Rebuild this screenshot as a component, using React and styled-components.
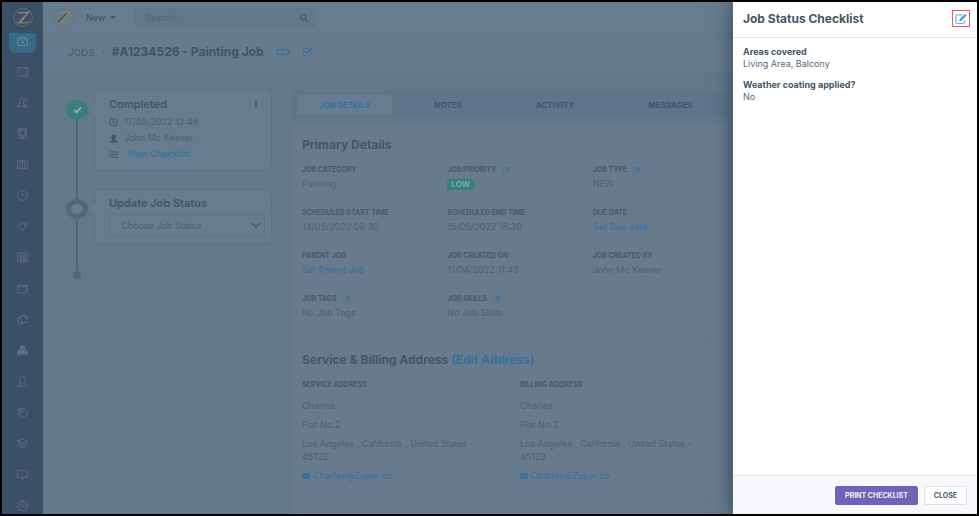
import styled, { createGlobalStyle } from 'styled-components';

const GlobalStyle = createGlobalStyle`
  *,
  *::before,
  *::after {
    box-sizing: border-box;
  }
  body {
    margin: 0;
    overflow: hidden;
    font-family: Inter, 'Open Sans', sans-serif;
    font-size: 9px;
    line-height: 12px;
    color: #4c6174;
  }
  h1, h2, h3, p, ul, ol, dl, dd {
    margin: 0;
    padding: 0;
    list-style: none;
  }
  button, input, select {
    font-family: inherit;
    margin: 0;
  }
  a {
    text-decoration: none;
  }
  svg {
    display: block;
    flex: none;
  }
`;

const Frame = styled.div`
  position: relative;
  display: flex;
  height: 100vh;
  border: 2px solid #000;
  overflow: hidden;
  background-color: #62798c;
`;

const Sidebar = styled.aside`
  width: 41px;
  flex: none;
  display: flex;
  flex-direction: column;
  background-color: #3b4f66;
  color: #607286;
`;
const SidebarLogo = styled.a`
  height: 31px;
  flex: none;
  display: flex;
  align-items: center;
  justify-content: center;
`;
const NavLink = styled.a`
  height: ${({ $active }) => ($active ? '20px' : '31px')};
  margin: ${({ $active }) => ($active ? '0 7px 3px' : '0 7px')};
  padding-bottom: ${({ $active }) => ($active ? '4px' : '0')};
  border-radius: 0 0 6px 6px;
  flex: none;
  display: flex;
  align-items: center;
  justify-content: center;
  color: ${({ $active }) => ($active ? '#6b8fa6' : 'inherit')};
  background-color: ${({ $active }) => ($active ? '#366a87' : 'transparent')};
`;

const Page = styled.div`
  flex: 1;
  min-width: 0;
  display: flex;
  flex-direction: column;
`;
const TopBar = styled.header`
  height: 32px;
  flex: none;
  display: flex;
  align-items: center;
  padding-left: 11px;
  background-color: #677d8f;
  border-bottom: 1px solid #61778a;
`;
const NewButton = styled.button`
  display: flex;
  align-items: center;
  gap: 5px;
  margin-left: 12px;
  padding: 0;
  border: none;
  background: none;
  font-size: 9px;
  font-weight: 500;
  color: #44586a;
`;
const SearchBox = styled.label`
  width: 181px;
  height: 19px;
  margin-left: 19px;
  padding: 0 8px 0 10px;
  display: flex;
  align-items: center;
  border-radius: 2px;
  background-color: #61778a;
  color: #44586a;
`;
const SearchInput = styled.input`
  flex: 1;
  min-width: 0;
  padding: 0;
  border: none;
  outline: none;
  background: none;
  font-size: 9px;
  &::placeholder {
    color: #50667a;
    opacity: 1;
  }
`;

const Crumbs = styled.nav`
  height: 39px;
  flex: none;
  display: flex;
  align-items: center;
  padding: 0 0 2px 24px;
  background-color: #667b8d;
  border-bottom: 1px solid #61768a;
`;
const CrumbLink = styled.a`
  font-size: 12px;
  line-height: 16px;
  color: #4b6073;
`;
const CrumbTitle = styled.h1`
  font-size: 12px;
  line-height: 16px;
  font-weight: 700;
  color: #40546a;
`;
const CrumbArrow = styled.svg`
  margin: 0 6px;
`;
const IconButton = styled.button`
  display: inline-flex;
  padding: 0;
  margin-left: ${({ $gap }) => $gap || 6}px;
  border: none;
  background: none;
  color: #33709f;
`;

/* right padding keeps the columns clear of the drawer */
const Content = styled.main`
  flex: 1;
  min-height: 0;
  display: grid;
  grid-template-columns: 205px minmax(0, 1fr);
  gap: 21px;
  padding: 18px 249px 0 23px;
`;

const Timeline = styled.ol`
  align-self: start;
  display: flex;
  flex-direction: column;
  gap: 20px;
  background: linear-gradient(#52677a, #52677a) no-repeat 10px 20px / 2px
    calc(100% - 22px);
`;
const TimelineItem = styled.li`
  display: flex;
  gap: 8px;
`;
const Marker = styled.span`
  width: 22px;
  height: 20px;
  margin-top: 9px;
  flex: none;
  display: flex;
  align-items: center;
  justify-content: center;
  border-radius: 50%;
  border: ${({ $done }) => ($done ? 'none' : '5px solid #52677a')};
  background-color: ${({ $done }) => ($done ? '#37807c' : '#677c8e')};
  color: #93a9b4;
`;
const EndDot = styled.li`
  width: 8px;
  height: 8px;
  margin: 8px 0 0 7px;
  border-radius: 50%;
  background-color: #52677a;
`;
const StatusCard = styled.section`
  position: relative;
  flex: 1;
  padding: 5px 6px 7px 13px;
  border-radius: 3px;
  background-color: #677c8e;
  box-shadow: 0 0 2px rgba(60, 80, 100, 0.35);
  &::before {
    content: '';
    position: absolute;
    left: -6px;
    top: 13px;
    border: 6px solid transparent;
    border-left: none;
    border-right-color: #677c8e;
  }
`;
const StatusTitle = styled.h2`
  display: flex;
  justify-content: space-between;
  align-items: center;
  padding-right: 7px;
  font-size: 11px;
  line-height: 16px;
  font-weight: 600;
  color: #42576a;
`;
const MenuButton = styled.button`
  padding: 0;
  border: none;
  background: none;
  color: #42576a;
`;
const StatusList = styled.ul`
  margin: 2px 0 1px;
`;
const StatusRow = styled.li`
  display: flex;
  align-items: center;
  gap: 6px;
  line-height: 16px;
`;
const StatusSelect = styled.select`
  display: block;
  width: 100%;
  height: 22px;
  margin-top: 3px;
  padding: 0 7px;
  border: 1px solid #5f7488;
  border-radius: 2px;
  background-color: #677c8e;
  font-size: 9px;
  color: #4c6174;
`;
const TextLink = styled.a`
  color: #35719f;
`;
const ChecklistLink = styled(TextLink)`
  margin-left: 3px;
`;

const Details = styled.div`
  min-width: 0;
  display: flex;
  flex-direction: column;
`;
const Tabs = styled.div`
  height: 27px;
  flex: none;
  display: flex;
  align-items: center;
  padding-left: 5px;
  border-radius: 3px;
  background-color: #60748b;
`;
const Tab = styled.button`
  height: 20px;
  padding: 0 ${({ $active }) => ($active ? 22 : 37)}px;
  margin-right: ${({ $active }) => ($active ? 5 : 0)}px;
  border: none;
  border-radius: 3px;
  background-color: ${({ $active }) => ($active ? '#677c8e' : 'transparent')};
  color: ${({ $active }) => ($active ? '#2f74a8' : '#42576a')};
  font-size: 8px;
  font-weight: 700;
  white-space: nowrap;
`;
const DetailsCard = styled.div`
  flex: 1;
  margin-top: 6px;
  padding-left: 10px;
  border-radius: 3px 3px 0 0;
  background-color: #687b8d;
  box-shadow: 0 0 2px rgba(60, 80, 100, 0.35);
`;
const Section = styled.section`
  margin-right: 10px;
  padding-top: ${({ $top }) => $top}px;
  border-bottom: 1px solid #62768a;
`;
const SectionTitle = styled.h2`
  font-size: 12px;
  line-height: 16px;
  font-weight: 700;
  color: #42576a;
`;
const FieldGrid = styled.dl`
  display: grid;
  grid-template-columns: repeat(3, 1fr);
  row-gap: 15px;
  margin: 11px -20px 20px 0;
`;
const FieldLabel = styled.dt`
  display: flex;
  align-items: center;
  height: 12px;
  font-size: 7px;
  font-weight: 700;
  color: #455a6d;
`;
const FieldValue = styled.dd`
  height: 16px;
  line-height: 16px;
`;
const Badge = styled.span`
  display: inline-block;
  padding: 0 4px;
  border-radius: 2px;
  background-color: #37807c;
  color: #8fa9b5;
  font-size: 8px;
  line-height: 11px;
  font-weight: 600;
`;
const AddressGrid = styled.div`
  display: grid;
  grid-template-columns: repeat(2, 1fr);
  margin: 11px -20px 21px 0;
`;
const Address = styled.address`
  display: flex;
  flex-direction: column;
  gap: 6px;
  padding-right: 40px;
  font-style: normal;
  line-height: 13px;
`;
const AddressLabel = styled.h3`
  margin: 0 0 2px;
  font-size: 7px;
  line-height: 12px;
  font-weight: 700;
  color: #455a6d;
`;
const MailLink = styled.a`
  display: flex;
  align-items: center;
  gap: 3px;
  color: #35719f;
`;

const Drawer = styled.aside`
  position: absolute;
  top: 0;
  right: 0;
  bottom: 0;
  width: 244px;
  display: flex;
  flex-direction: column;
  background-color: #fff;
  color: #566a78;
  box-shadow: 0 0 20px rgba(30, 45, 60, 0.7);
`;
const DrawerHeader = styled.header`
  height: 36px;
  flex: none;
  display: flex;
  align-items: center;
  justify-content: space-between;
  padding: 0 7px 2px 10px;
  border-bottom: 1px solid #e6e9ec;
`;
const DrawerTitle = styled.h2`
  font-size: 12px;
  line-height: 16px;
  font-weight: 700;
  color: #435663;
`;
const EditButton = styled.button`
  width: 18px;
  height: 17px;
  padding: 0;
  display: flex;
  align-items: center;
  justify-content: center;
  border: 1px solid #f0595c;
  background: none;
  color: #3e9be4;
`;
const Answers = styled.dl`
  flex: 1;
  padding: 8px 10px;
`;
const Question = styled.dt`
  line-height: 12px;
  font-weight: 700;
  color: #435663;
`;
const Answer = styled.dd`
  margin-bottom: 10px;
  line-height: 11px;
`;
const DrawerFooter = styled.footer`
  height: 39px;
  flex: none;
  display: flex;
  align-items: center;
  justify-content: flex-end;
  gap: 6px;
  padding-right: 10px;
  border-top: 1px solid #e6e9ec;
  background-color: #f7f8fb;
`;
const Button = styled.button`
  height: 19px;
  padding: 0 9px;
  border: 1px solid ${({ $primary }) => ($primary ? '#6f63b8' : '#dfe3e8')};
  border-radius: 2px;
  background-color: ${({ $primary }) => ($primary ? '#6f63b8' : '#fff')};
  color: ${({ $primary }) => ($primary ? '#f1effa' : '#4b5d6b')};
  font-size: 7px;
  font-weight: 700;
`;

const Logo = () => (
  <svg width="20" height="19" viewBox="0 0 20 19" fill="none" aria-label="Zuper">
    <ellipse cx="10" cy="9.5" rx="9.4" ry="8.8" stroke="#6e7168" strokeWidth="0.9" />
    <path d="M3.800 4.600C7 3.600 12 4.300 16.800 3.600L15.200 5.400H5z" fill="#85806a" />
    <path d="M13.300 4.600l3.500-1L8.400 14H4z" fill="#8d866a" />
    <path d="M12 5.200h1.800L5.500 14H3.200z" fill="#43505a" />
    <path d="M3.200 14.200h9.300c2 0 3.500-.8 4.300-2.600-.2 2.600-1.500 4-4 4H4.500z" fill="#85806a" />
  </svg>
);

const EditIcon = ({ size = 8 }) => (
  <svg width={size} height={size} viewBox="0 0 16 16" fill="none" stroke="currentColor">
    <path d="M10 2.500H3A1.800 1.800 0 0 0 1.200 4.300v8A1.800 1.800 0 0 0 3 14.100h8.200a1.800 1.800 0 0 0 1.800-1.800V9.500" strokeWidth="1.200" />
    <path d="M13.200 1.500l1.900 1.900-6.600 6.600-2.500.600.600-2.500z" fill="currentColor" strokeWidth=".5" />
  </svg>
);

const navIcons = [
  {
    label: 'Jobs',
    d: 'M1 4h14v10H1zM5 4V1.500h6V4M1 6h2M13 6h2M8 6.500v5M5.500 9h5',
  },
  {
    label: 'Calendar',
    d: 'M1 2.500h14v12H1zM4 1v3M12 1v3M4 7h1M7.500 7h1M11 7h1M4 9.500h1M7.500 9.500h1M11 9.500h1M4 12h1M7.500 12h1M11 12h1',
  },
  {
    label: 'Customers',
    d: 'M6 14H1c0-2 1-3 3-4 .8-.5.500-1 0-2C2 4 4 1 6.500 1S11 4 9.500 8c-.5 1-.5 1.500 0 2 2 1 3.500 2 3.500 4zM11 2c3 0 3.500 3 2 6M11 9.500l4 4-2 1.500-3-3',
  },
  { label: 'Properties', d: 'M2.500 1h11v14h-11zM4.500 3h7v8h-7zM6.500 15v-2.500h3V15' },
  {
    label: 'Map',
    d: 'M1 3l3.500-1.500v12L1 15zM4.500 1.500L8 3v12l-3.500-1.500M8 3l3.500-1.500v12L8 15M11.500 1.500L15 3v12l-3.500-1.500',
  },
  { label: 'Timesheets', d: 'M8 1a7 7 0 1 0 0 14A7 7 0 1 0 8 1zM8 4v4.500l3 1.500' },
  { label: 'Products', d: 'M1 8.500L8 2.500l6-.5.5 5.500-7 6.500zM11 4.500h1.500V6H11z' },
  {
    label: 'Quotes',
    d: 'M1 1.500h14v13H1zM4 4.500h3v3H4zM9 4.500h3v3H9zM4 9.500h3v3H4zM9 9.500h3v3H9z',
  },
  { label: 'Invoices', d: 'M1 5h12.500v9.500H1zM2 5V2h5l1 1.500h6.500V12M3.500 8v1.500' },
  { label: 'Documents', d: 'M6 2h6l3 3v7H6zM11.500 2v3.500H15M6 5H1.500v9.500H9V12' },
  {
    label: 'Assets',
    d: 'M8 1.500l3 1.500v3L8 7.500 5 6V3zM4 8l3 1.500v3.500l-3 1.500L1 13V9.500zM12 8l3 1.500V13l-3 1.500L9 13V9.500zM5 3l3 1.500L11 3M1 9.500L4 11l3-1.500M9 9.500l3 1.500 3-1.500',
    bold: true,
  },
  {
    label: 'Team',
    d: 'M1 14.500h14c0-2-1-2.500-4.500-3.500-.8-.5-.5-1.500 0-2.500C13 4.500 11 1 8 1S3 4.500 5.500 8.500c.5 1 .8 2 0 2.500C2 12 1 12.500 1 14.500z',
  },
  { label: 'Reports', d: 'M7.500 2A6.500 6.500 0 1 1 2 7.500h5.500zM5 1.500A5 5 0 0 0 1.500 5H5z' },
  {
    label: 'Stacks',
    d: 'M8 1l7 3.500L8 8 1 4.500zM1 7.500L8 11l7-3.500M1 11l7 3.500 7-3.500',
  },
  { label: 'Devices', d: 'M1 2h14v10H1zM5.500 14.500h5M8 12v2.500' },
  {
    label: 'Settings',
    d: 'M6.800 1h2.400l.4 2 1.600.7 1.700-1.100 1.600 1.600-1.100 1.700.7 1.500 1.900.4v2.400l-2 .4-.6 1.500 1.100 1.700-1.600 1.600-1.700-1.100-1.600.7-.4 1.900H6.800l-.4-2-1.600-.6-1.700 1.100-1.600-1.600 1.100-1.700L2 10.500l-1.500-.3V7.800l2-.4L3 5.900 1.900 4.200l1.600-1.600 1.700 1.100L6.400 3zM8 5.500a2.500 2.500 0 1 0 0 5 2.500 2.500 0 1 0 0-5z',
  },
];

const statusIcons = {
  time: (
    <svg width="9" height="9" viewBox="0 0 16 16" fill="none" stroke="#42576a" strokeWidth="1.800">
      <circle cx="8" cy="8" r="6.800" />
      <path d="M8 4v4.500H11" />
    </svg>
  ),
  user: (
    <svg width="9" height="9" viewBox="0 0 16 16" fill="#42576a">
      <path d="M8 1c3 0 4.500 2 4 5-.3 2-1.300 3-2 4 1 1.500 5.500 1.500 5.500 5H.5c0-3.500 4.500-3.500 5.500-5-.7-1-1.700-2-2-4-.5-3 1-5 4-5z" />
    </svg>
  ),
  list: (
    <svg width="9" height="9" viewBox="0 0 16 16" stroke="#42576a" strokeWidth="2">
      <path d="M0 3.500h3M4 3.500h12M0 8h3M4 8h12M0 12.500h3M4 12.500h12" />
    </svg>
  ),
};

const fields = [
  { label: 'JOB CATEGORY', value: 'Painting' },
  { label: 'JOB PRIORITY', value: <Badge>LOW</Badge>, editable: true },
  { label: 'JOB TYPE', value: 'NEW', editable: true },
  { label: 'SCHEDULED START TIME', value: '14/05/2022 09:30' },
  { label: 'SCHEDULED END TIME', value: '15/05/2022 18:30' },
  { label: 'DUE DATE', value: <TextLink href="#due">Set Due date</TextLink> },
  { label: 'PARENT JOB', value: <TextLink href="#parent">Set Parent Job</TextLink> },
  { label: 'JOB CREATED ON', value: '11/04/2022 11:43' },
  { label: 'JOB CREATED BY', value: 'John Mc Keever' },
  { label: 'JOB TAGS', value: 'No Job Tags', editable: true },
  { label: 'JOB SKILLS', value: 'No Job Skills', editable: true },
];

const tabs = ['JOB DETAILS', 'NOTES', 'ACTIVITY', 'MESSAGES'];

const SideNav = () => (
  <Sidebar>
    <SidebarLogo href="#home">
      <Logo />
    </SidebarLogo>
    {navIcons.map(({ label, d, bold }, i) => (
      <NavLink key={label} href={`#${label}`} aria-label={label} $active={i === 0}>
        <svg
          width="11"
          height="11"
          viewBox="0 0 16 16"
          fill="none"
          stroke="currentColor"
          strokeWidth={bold ? 2 : 1.2}
        >
          <path d={d} />
        </svg>
      </NavLink>
    ))}
  </Sidebar>
);

const JobTimeline = () => (
  <Timeline>
    <TimelineItem>
      <Marker $done>
        <svg width="9" height="8" viewBox="0 0 9 8" fill="none" stroke="currentColor" strokeWidth="2">
          <path d="M1 4l2.500 2.300L8 1.500" />
        </svg>
      </Marker>
      <StatusCard>
        <StatusTitle>
          Completed
          <MenuButton aria-label="More actions">
            <svg width="3" height="8" viewBox="0 0 3 8" fill="currentColor">
              <path d="M0 0h2v2H0zM0 3h2v2H0zM0 6h2v2H0z" />
            </svg>
          </MenuButton>
        </StatusTitle>
        <StatusList>
          <StatusRow>
            {statusIcons.time}
            17/05/2022 12:46
          </StatusRow>
          <StatusRow>
            {statusIcons.user}
            John Mc Keever
          </StatusRow>
          <StatusRow>
            {statusIcons.list}
            <ChecklistLink href="#checklist">View Checklist</ChecklistLink>
          </StatusRow>
        </StatusList>
      </StatusCard>
    </TimelineItem>
    <TimelineItem>
      <Marker />
      <StatusCard>
        <StatusTitle>Update Job Status</StatusTitle>
        <StatusSelect aria-label="Job status">
          <option>Choose Job Status</option>
        </StatusSelect>
      </StatusCard>
    </TimelineItem>
    <EndDot />
  </Timeline>
);

const AddressBlock = ({ label }) => (
  <Address>
    <AddressLabel>{label}</AddressLabel>
    <p>Charles</p>
    <p>Flat No.2</p>
    <p>
      Los Angeles , California , United States -<br />
      45123
    </p>
    <MailLink href="mailto:Charles@Zuper.co">
      <svg width="8" height="6" viewBox="0 0 8 6">
        <rect width="8" height="6" rx="1" fill="currentColor" />
        <path d="M1 1.500l3 2 3-2" fill="none" stroke="#687b8d" strokeWidth=".6" />
      </svg>
      Charles@Zuper.co
    </MailLink>
  </Address>
);

const JobDetails = () => (
  <Details>
    <Tabs role="tablist">
      {tabs.map((tab, i) => (
        <Tab key={tab} role="tab" aria-selected={i === 0} $active={i === 0}>
          {tab}
        </Tab>
      ))}
    </Tabs>
    <DetailsCard>
      <Section $top={13}>
        <SectionTitle>Primary Details</SectionTitle>
        <FieldGrid>
          {fields.map(({ label, value, editable }) => (
            <div key={label}>
              <FieldLabel>
                {label}
                {editable && (
                  <IconButton aria-label={`Edit ${label}`}>
                    <EditIcon />
                  </IconButton>
                )}
              </FieldLabel>
              <FieldValue>{value}</FieldValue>
            </div>
          ))}
        </FieldGrid>
      </Section>
      <Section $top={10}>
        <SectionTitle>
          Service &amp; Billing Address <TextLink href="#address">(Edit Address)</TextLink>
        </SectionTitle>
        <AddressGrid>
          <AddressBlock label="SERVICE ADDRESS" />
          <AddressBlock label="BILLING ADDRESS" />
        </AddressGrid>
      </Section>
    </DetailsCard>
  </Details>
);

const ChecklistDrawer = () => (
  <Drawer role="dialog" aria-labelledby="checklist-title">
    <DrawerHeader>
      <DrawerTitle id="checklist-title">Job Status Checklist</DrawerTitle>
      <EditButton aria-label="Edit checklist">
        <EditIcon size={12} />
      </EditButton>
    </DrawerHeader>
    <Answers>
      <Question>Areas covered</Question>
      <Answer>Living Area, Balcony</Answer>
      <Question>Weather coating applied?</Question>
      <Answer>No</Answer>
    </Answers>
    <DrawerFooter>
      <Button $primary>PRINT CHECKLIST</Button>
      <Button>CLOSE</Button>
    </DrawerFooter>
  </Drawer>
);

const App = () => (
  <>
    <GlobalStyle />
    <Frame>
      <SideNav />
      <Page>
        <TopBar>
          <Logo />
          <NewButton>
            New
            <svg width="6" height="3" viewBox="0 0 6 3" fill="currentColor">
              <path d="M0 0h6L3 3z" />
            </svg>
          </NewButton>
          <SearchBox>
            <SearchInput placeholder="Search.." aria-label="Search" />
            <svg width="8" height="8" viewBox="0 0 8 8" fill="none" stroke="currentColor" strokeWidth="1.200">
              <circle cx="3.300" cy="3.300" r="2.600" />
              <path d="M5.200 5.200l2.500 2.500" />
            </svg>
          </SearchBox>
        </TopBar>
        <Crumbs>
          <CrumbLink href="#jobs">Jobs</CrumbLink>
          <CrumbArrow width="5" height="6" viewBox="0 0 5 6" fill="none" stroke="#50657a">
            <path d="M1 .5L3.500 3 1 5.500" />
          </CrumbArrow>
          <CrumbTitle>#A1234526 - Painting Job</CrumbTitle>
          <IconButton $gap={12} aria-label="Copy link">
            <svg width="14" height="8" viewBox="0 0 14 8" fill="none" stroke="currentColor" strokeWidth="1.200">
              <path d="M5 6.400H3.300a2.400 2.400 0 0 1 0-4.800H7.500M9 1.600h1.700a2.400 2.400 0 0 1 0 4.800H6.500" />
              <path d="M6.500 0v3.200L8.500 1.600zM7.500 4.800V8L5.500 6.400z" fill="currentColor" stroke="none" />
            </svg>
          </IconButton>
          <IconButton $gap={13} aria-label="Edit job">
            <EditIcon size={10} />
          </IconButton>
        </Crumbs>
        <Content>
          <JobTimeline />
          <JobDetails />
        </Content>
      </Page>
      <ChecklistDrawer />
    </Frame>
  </>
);

export default App;
